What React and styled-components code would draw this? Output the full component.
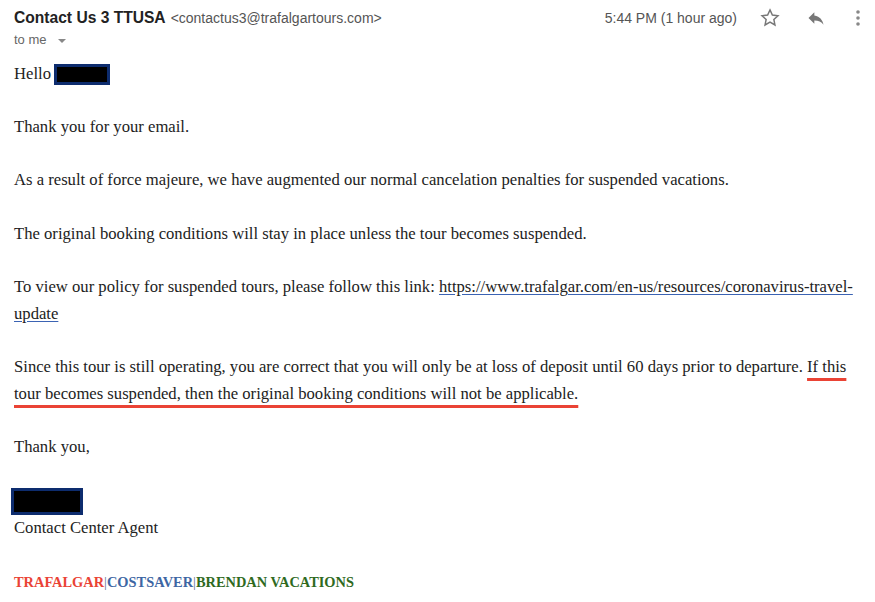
import React from "react";
import styled, { createGlobalStyle } from "styled-components";

const Global = createGlobalStyle`
  html, body {
    margin: 0;
    padding: 0;
    background: #ffffff;
  }
`;

const Mail = styled.div`
  width: 875px;
  height: 602px;
  box-sizing: border-box;
  padding: 8px 14px 0 14px;
  overflow: hidden;
  background: #fff;
`;

const Header = styled.div`
  display: flex;
  justify-content: space-between;
  align-items: flex-start;
`;

const From = styled.div`
  display: flex;
  flex-direction: column;
  font-family: "Liberation Sans", Arial, sans-serif;
`;

const SenderLine = styled.div`
  height: 20px;
  line-height: 20px;
  white-space: nowrap;
`;

const SenderName = styled.span`
  font-size: 15.6px;
  font-weight: 700;
  color: #222;
`;

const SenderMail = styled.span`
  font-size: 14px;
  color: #555;
  margin-left: 5px;
`;

const ToMe = styled.div`
  margin-top: 2px;
  height: 20px;
  line-height: 20px;
  font-size: 13px;
  color: #666;
  display: flex;
  align-items: center;
  gap: 11px;
`;

const Caret = styled.span`
  width: 0;
  height: 0;
  border-left: 4px solid transparent;
  border-right: 4px solid transparent;
  border-top: 4px solid #888;
  margin-top: 1px;
`;

const Meta = styled.div`
  display: flex;
  align-items: center;
  height: 20px;
  font-family: "Liberation Sans", Arial, sans-serif;
  margin-right: -16px;
`;

const Time = styled.span`
  font-size: 14px;
  color: #555;
  margin-right: 10px;
  white-space: nowrap;
`;

const IconBtn = styled.span`
  width: ${({ w }) => w}px;
  height: 20px;
  display: flex;
  align-items: center;
  justify-content: center;
`;

const Body = styled.div`
  margin-top: 10.6px;
  font-family: "Liberation Serif", "Times New Roman", serif;
  font-size: 16.65px;
  line-height: 26.7px;
  color: #222;
`;

const P = styled.div`
  margin: 0 0 26.7px 0;
`;

const Redacted = styled.span`
  display: inline-block;
  vertical-align: middle;
  box-sizing: border-box;
  width: ${({ w }) => w}px;
  height: ${({ h }) => h}px;
  background: #000;
  border: 3px solid #0d2c6e;
  margin-left: ${({ ml }) => ml || 0}px;
`;

const Link = styled.a`
  color: #222;
  text-decoration: underline;
  text-decoration-color: #3b63b3;
  text-underline-offset: 2px;
`;

const Marked = styled.span`
  text-decoration: underline;
  text-decoration-color: #ea4335;
  text-decoration-thickness: 3px;
  text-underline-offset: 6px;
  text-decoration-skip-ink: none;
`;

const Brand = styled.div`
  font-weight: 700;
  font-size: 14.4px;
`;

const BrandPart = styled.span`
  color: ${({ c }) => c};
`;

const Sep = styled.span`
  font-weight: 400;
  color: #5a6f8f;
`;

const StarIcon = () => (
  <svg width="22" height="22" viewBox="0 0 24 24">
    <path
      d="M12 3.2l2.6 5.6 6.1.7-4.5 4.1 1.2 6-5.4-3.1-5.4 3.1 1.2-6L3.3 9.5l6.1-.7z"
      fill="none"
      stroke="#777"
      strokeWidth="1.6"
    />
  </svg>
);

const ReplyIcon = () => (
  <svg width="20" height="20" viewBox="0 0 24 24">
    <path d="M10 9V5l-7 7 7 7v-4.1c5 0 8.5 1.6 11 5.1-1-5-4-10-11-11z" fill="#777" />
  </svg>
);

const MoreIcon = () => (
  <svg width="6" height="18" viewBox="0 0 6 18">
    <circle cx="3" cy="3" r="1.8" fill="#888" />
    <circle cx="3" cy="9" r="1.8" fill="#888" />
    <circle cx="3" cy="15" r="1.8" fill="#888" />
  </svg>
);

export default function App() {
  return (
    <Mail>
      <Global />
      <Header>
        <From>
          <SenderLine>
            <SenderName>Contact Us 3 TTUSA</SenderName>
            <SenderMail>&lt;contactus3@trafalgartours.com&gt;</SenderMail>
          </SenderLine>
          <ToMe>
            to me <Caret />
          </ToMe>
        </From>
        <Meta>
          <Time>5:44 PM (1 hour ago)</Time>
          <IconBtn w={46}>
            <StarIcon />
          </IconBtn>
          <IconBtn w={46}>
            <ReplyIcon />
          </IconBtn>
          <IconBtn w={38}>
            <MoreIcon />
          </IconBtn>
        </Meta>
      </Header>
      <Body>
        <P>
          Hello <Redacted w={56} h={21} ml={-1} />
        </P>
        <P>Thank you for your email.</P>
        <P>
          As a result of force majeure, we have augmented our normal cancelation penalties for
          suspended vacations.
        </P>
        <P>The original booking conditions will stay in place unless the tour becomes suspended.</P>
        <P>
          To view our policy for suspended tours, please follow this link:{" "}
          <Link href="#">https://www.trafalgar.com/en-us/resources/coronavirus-travel-update</Link>
        </P>
        <P>
          Since this tour is still operating, you are correct that you will only be at loss of
          deposit until 60 days prior to departure.{" "}
          <Marked>
            If this tour becomes suspended, then the original booking conditions will not be
            applicable.
          </Marked>
        </P>
        <P>Thank you,</P>
        <div>
          <Redacted w={72} h={27} ml={-3} />
        </div>
        <P>Contact Center Agent</P>
        <Brand>
          <BrandPart c="#ea4335">TRAFALGAR</BrandPart>
          <Sep>|</Sep>
          <BrandPart c="#3d66a3">COSTSAVER</BrandPart>
          <Sep>|</Sep>
          <BrandPart c="#2f6a1e">BRENDAN VACATIONS</BrandPart>
        </Brand>
      </Body>
    </Mail>
  );
}
